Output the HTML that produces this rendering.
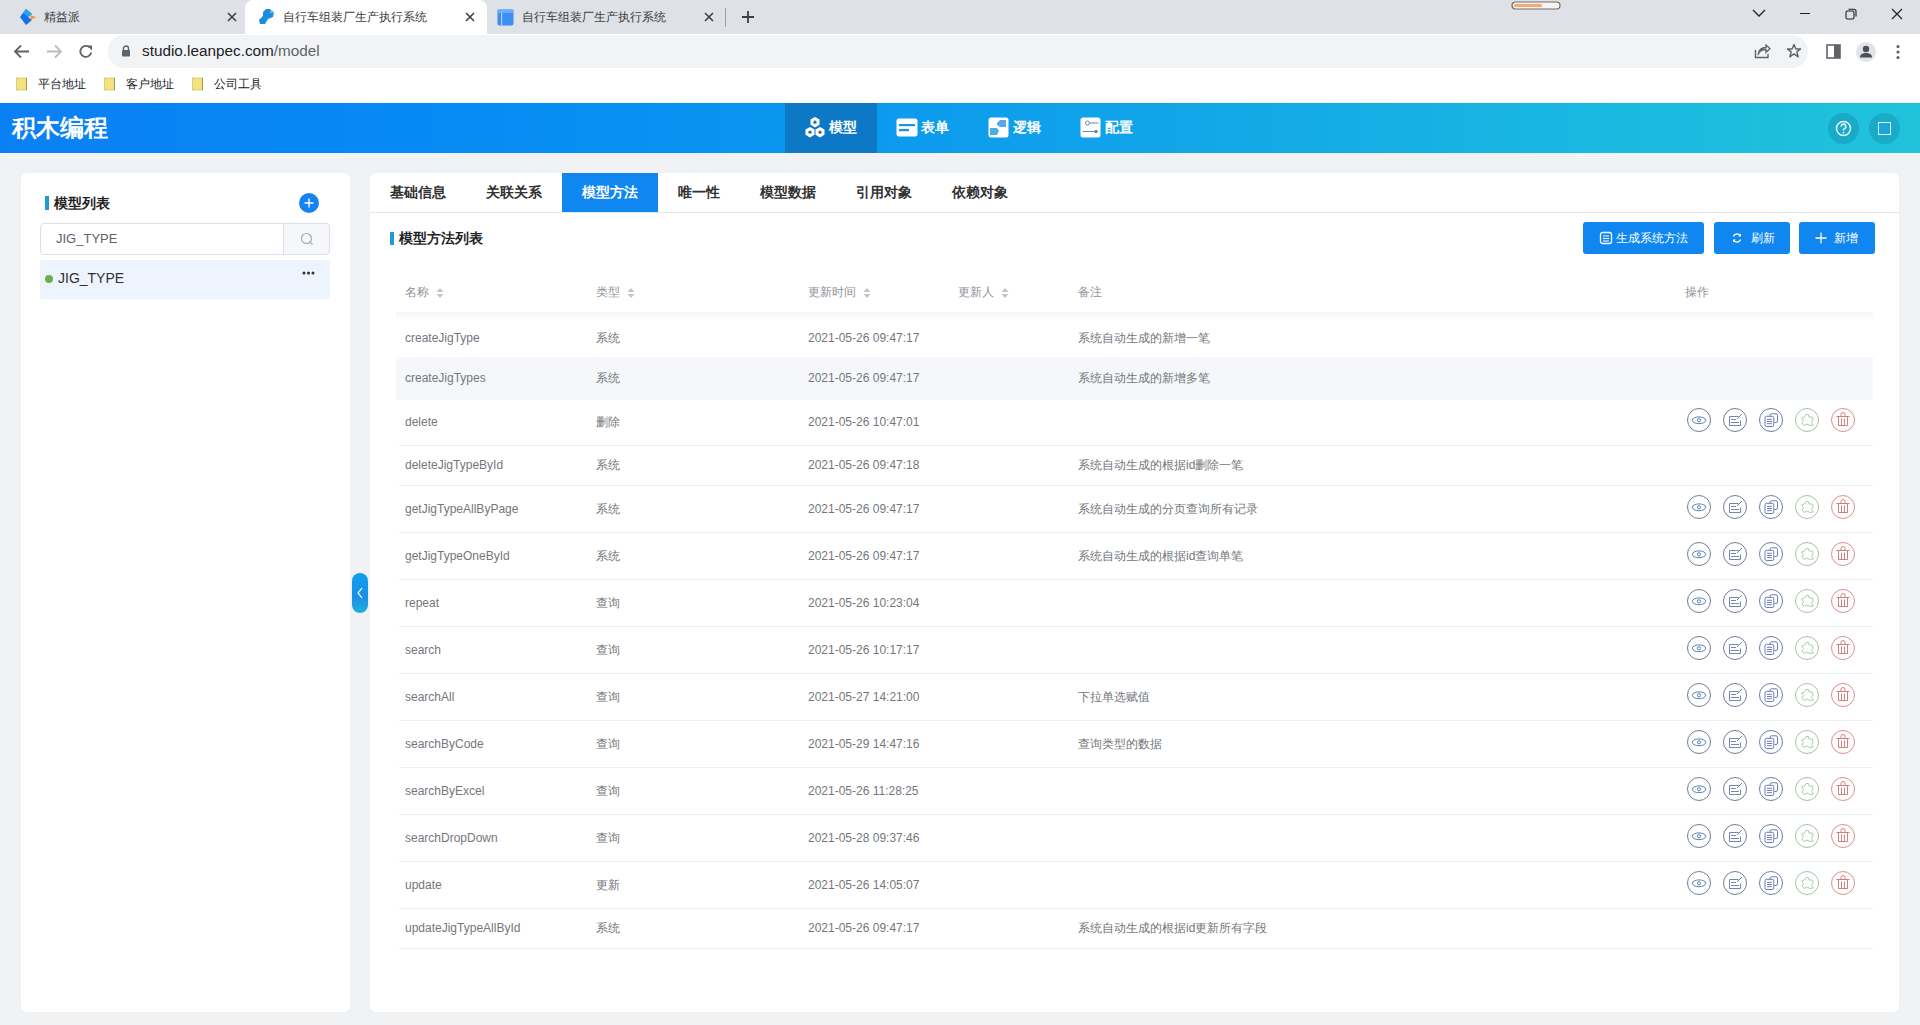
<!DOCTYPE html>
<html><head><meta charset="utf-8">
<style>
*{box-sizing:border-box;margin:0;padding:0}
html,body{width:1920px;height:1025px;overflow:hidden;font-family:"Liberation Sans",sans-serif;background:#f0f2f4;position:relative}
.abs{position:absolute}
/* chrome */
#tabbar{left:0;top:0;width:1920px;height:34px;background:#dee1e6}
#toolbar{left:0;top:34px;width:1920px;height:34px;background:#fff}
#bookmarks{left:0;top:68px;width:1920px;height:35px;background:#fff}
.tab{top:0;height:34px;font-size:12px;color:#3c4043;line-height:34px}
.bm{top:0;height:34px;line-height:33px;font-size:12px;color:#202124}
.tabact{background:#fff;border-radius:8px 8px 0 0}
#omni{left:108px;top:36px;width:1672px;height:31px;background:#f2f3f5;border-radius:16px}
/* header */
#hdr{left:0;top:103px;width:1920px;height:50px;background:linear-gradient(90deg,#0a80f5 0%,#0688f5 20%,#0894f0 38%,#12a6e8 62%,#18b6e2 80%,#20c3da 100%)}
#logo{left:12px;top:0;height:50px;line-height:50px;color:#fff;font-size:24px;font-weight:bold}
.nav{top:-1px;height:51px;width:92px;color:#fff;font-size:14px;line-height:51px;font-weight:600}
.navact{background:#0d79c6}
/* panels */
#lp{left:21px;top:173px;width:329px;height:839px;background:#fff;border-radius:6px}
#rp{left:370px;top:173px;width:1529px;height:839px;background:#fff;border-radius:6px}
.t14b{font-size:14px;font-weight:bold;color:#1f1f1f}
.bar{width:4px;height:14px;background:#1e9ad6}
.ptab{top:0;height:39px;line-height:39px;font-size:14px;color:#303133;text-align:center}
.btn{top:49px;height:32px;background:#0f86f0;border-radius:3px;color:#fff;font-size:12px;line-height:32px}
.th{font-size:12px;color:#909399;top:119px;line-height:0}
.cell{font-size:12px;color:#74777c;line-height:0}
.sep{left:29px;width:1474px;height:1px;background:#edeff3}
.act{width:24px;height:24px;border-radius:50%;border:1px solid #5f6b7d}
</style></head><body>
<div id="tabbar" class="abs">
  <svg class="abs" style="left:18px;top:8px" width="20" height="18" viewBox="0 0 20 18"><path d="M8 1 L14 6 L10 9 L14 12 L8 17 L2 9 Z" fill="#1570e8"/><path d="M8 1 L14 6 L10 9 L5 5 Z" fill="#29a3f0"/><path d="M12 7 L18 9 L13 12 Z" fill="#f7963a"/></svg>
  <div class="abs tab" style="left:44px">精益派</div>
  <svg class="abs" style="left:227px;top:12px" width="10" height="10" viewBox="0 0 10 10"><path d="M1 1L9 9M9 1L1 9" stroke="#3c4043" stroke-width="1.6"/></svg>
  <div class="abs tabact" style="left:245px;top:0;width:242px;height:34px"></div>
  <svg class="abs" style="left:257px;top:7px" width="20" height="20" viewBox="0 0 20 20"><path d="M9 2 L13 2 L13 6 L17 5 L16 10 L11 12 L8 17 L3 17 L2 13 L6 9 L6 5 Z" fill="#1c8ee0"/><path d="M13 2 L17 5 L13 6Z" fill="#5ab4f0"/></svg>
  <div class="abs tab" style="left:283px">自行车组装厂生产执行系统</div>
  <svg class="abs" style="left:465px;top:12px" width="10" height="10" viewBox="0 0 10 10"><path d="M1 1L9 9M9 1L1 9" stroke="#3c4043" stroke-width="1.6"/></svg>
  <svg class="abs" style="left:497px;top:9px" width="17" height="17" viewBox="0 0 17 17"><rect x="0.5" y="0.5" width="16" height="16" rx="2" fill="#3d8ef0"/><rect x="0.5" y="0.5" width="16" height="3.5" fill="#6aaef5"/><rect x="4" y="4" width="1.2" height="12.5" fill="#a8d0fa"/></svg>
  <div class="abs tab" style="left:522px">自行车组装厂生产执行系统</div>
  <svg class="abs" style="left:704px;top:12px" width="10" height="10" viewBox="0 0 10 10"><path d="M1 1L9 9M9 1L1 9" stroke="#3c4043" stroke-width="1.6"/></svg>
  <div class="abs" style="left:725px;top:8px;width:1px;height:19px;background:#9aa0a6"></div>
  <svg class="abs" style="left:741px;top:10px" width="14" height="14" viewBox="0 0 14 14"><path d="M7 1V13M1 7H13" stroke="#3c4043" stroke-width="1.8"/></svg>
  <svg class="abs" style="left:1511px;top:1px" width="50" height="9" viewBox="0 0 50 9"><rect x="1" y="1" width="48" height="7" rx="3.5" fill="#f4f4f4" stroke="#7a6a5a" stroke-width="1.2"/><rect x="3" y="3" width="28" height="3" rx="1.5" fill="#f0a878"/></svg>
  <svg class="abs" style="left:1752px;top:9px" width="14" height="9" viewBox="0 0 14 9"><path d="M1 1L7 7L13 1" fill="none" stroke="#202124" stroke-width="1.3"/></svg>
  <div class="abs" style="left:1800px;top:13px;width:10px;height:1px;background:#202124"></div>
  <svg class="abs" style="left:1845px;top:8px" width="12" height="12" viewBox="0 0 12 12"><rect x="1" y="3" width="8" height="8" rx="1.5" fill="none" stroke="#202124" stroke-width="1.1"/><path d="M3.5 1.2H9a2 2 0 0 1 2 2V8.5" fill="none" stroke="#202124" stroke-width="1.1"/></svg>
  <svg class="abs" style="left:1891px;top:8px" width="12" height="12" viewBox="0 0 12 12"><path d="M1 1L11 11M11 1L1 11" stroke="#202124" stroke-width="1.2"/></svg>
</div>
<div id="toolbar" class="abs">
  <svg class="abs" style="left:13px;top:10px" width="17" height="15" viewBox="0 0 17 15"><path d="M16 7.5H2M8 1.5L2 7.5L8 13.5" fill="none" stroke="#5f6368" stroke-width="1.8"/></svg>
  <svg class="abs" style="left:46px;top:10px" width="17" height="15" viewBox="0 0 17 15"><path d="M1 7.5H15M9 1.5L15 7.5L9 13.5" fill="none" stroke="#b9bcc0" stroke-width="1.8"/></svg>
  <svg class="abs" style="left:78px;top:10px" width="16" height="16" viewBox="0 0 16 16"><path d="M13.2 8.5A5.5 5.5 0 1 1 11.6 3.4" fill="none" stroke="#5f6368" stroke-width="1.8"/><path d="M9 1.5H14V6.5Z" fill="#5f6368"/></svg>
  <div id="omni" class="abs" style="top:1px;left:108px;width:1700px;height:33px"></div>
  <svg class="abs" style="left:121px;top:11px" width="10" height="12" viewBox="0 0 10 12"><path d="M2.5 5V3.5a2.5 2.5 0 0 1 5 0V5" fill="none" stroke="#5f6368" stroke-width="1.4"/><rect x="1" y="5" width="8" height="6.5" rx="1" fill="#5f6368"/></svg>
  <div class="abs" style="left:142px;top:0;height:34px;line-height:34px;font-size:15.3px;color:#202124">studio.leanpec.com<span style="color:#5f6368">/model</span></div>
  <svg class="abs" style="left:1754px;top:10px" width="17" height="15" viewBox="0 0 17 15"><path d="M1.5 6V13.5H14V10" fill="none" stroke="#5f6368" stroke-width="1.4"/><path d="M4 11C5 7 8 5.5 12 5.5V8.5L16 4.5L12 1V3.5C7 3.5 4.5 7 4 11Z" fill="none" stroke="#5f6368" stroke-width="1.3"/></svg>
  <svg class="abs" style="left:1786px;top:9px" width="16" height="16" viewBox="0 0 16 16"><path d="M8 1.5L9.9 6H14.6L10.8 8.9L12.2 13.8L8 10.9L3.8 13.8L5.2 8.9L1.4 6H6.1Z" fill="none" stroke="#5f6368" stroke-width="1.4" stroke-linejoin="round"/></svg>
  <svg class="abs" style="left:1826px;top:10px" width="16" height="15" viewBox="0 0 16 15"><rect x="1" y="1" width="13" height="13" fill="none" stroke="#5f6368" stroke-width="1.6"/><rect x="8" y="1" width="6" height="13" fill="#5f6368"/></svg>
  <div class="abs" style="left:1856px;top:8px;width:20px;height:20px;border-radius:50%;background:#e1e3e8"></div>
  <svg class="abs" style="left:1859px;top:10px" width="14" height="15" viewBox="0 0 14 15"><circle cx="7" cy="5" r="3.2" fill="#4b4f58"/><path d="M1 13.5C1 10 4 9 7 9S13 10 13 13.5Z" fill="#4b4f58"/></svg>
  <svg class="abs" style="left:1895px;top:10px" width="6" height="16" viewBox="0 0 6 16"><circle cx="3" cy="2.5" r="1.6" fill="#5f6368"/><circle cx="3" cy="8" r="1.6" fill="#5f6368"/><circle cx="3" cy="13.5" r="1.6" fill="#5f6368"/></svg>
</div>
<div id="bookmarks" class="abs">
  <svg class="abs" style="left:16px;top:9px" width="13" height="14" viewBox="0 0 13 14"><rect x="0.5" y="1" width="10" height="12" fill="#f6e27a" stroke="#cfc37a" stroke-width="0.8"/><path d="M10.5 1V13" stroke="#8c8a6a" stroke-width="0.8"/></svg>
  <div class="abs bm" style="left:38px">平台地址</div>
  <svg class="abs" style="left:104px;top:9px" width="13" height="14" viewBox="0 0 13 14"><rect x="0.5" y="1" width="10" height="12" fill="#f6e27a" stroke="#cfc37a" stroke-width="0.8"/><path d="M10.5 1V13" stroke="#8c8a6a" stroke-width="0.8"/></svg>
  <div class="abs bm" style="left:126px">客户地址</div>
  <svg class="abs" style="left:192px;top:9px" width="13" height="14" viewBox="0 0 13 14"><rect x="0.5" y="1" width="10" height="12" fill="#f6e27a" stroke="#cfc37a" stroke-width="0.8"/><path d="M10.5 1V13" stroke="#8c8a6a" stroke-width="0.8"/></svg>
  <div class="abs bm" style="left:214px">公司工具</div>
</div>
<div id="hdr" class="abs">
  <div id="logo" class="abs">积木编程</div>
  <div class="abs navact" style="left:785px;top:0;width:92px;height:50px"></div>
  <svg class="abs" style="left:804px;top:13px" width="22" height="23" viewBox="0 0 22 23"><g fill="#fff"><path d="M11 1L15.5 3.6V8.8L11 11.4L6.5 8.8V3.6Z"/><path d="M6 11L10.5 13.6V18.8L6 21.4L1.5 18.8V13.6Z"/><path d="M16 11L20.5 13.6V18.8L16 21.4L11.5 18.8V13.6Z"/></g><g fill="#2a6aa0"><circle cx="11" cy="6.2" r="1.6"/><circle cx="6" cy="16.2" r="1.6"/><circle cx="16" cy="16.2" r="1.6"/></g></svg>
  <div class="abs nav" style="left:829px">模型</div>
  <svg class="abs" style="left:896px;top:15px" width="22" height="19" viewBox="0 0 22 19"><rect x="0.5" y="0.5" width="21" height="18" rx="2.5" fill="#fff"/><rect x="3" y="6" width="16" height="2.2" fill="#1a95e6"/><rect x="3" y="11" width="10" height="2.2" fill="#1a95e6"/></svg>
  <div class="abs nav" style="left:921px">表单</div>
  <svg class="abs" style="left:988px;top:14px" width="21" height="21" viewBox="0 0 21 21"><rect x="0.5" y="0.5" width="20" height="20" rx="2.5" fill="#fff"/><path d="M9 6L12 3H18V10H12L9 8Z" fill="#5aa5ea"/><path d="M2 11H9L11 14L9 18H2Z" fill="#47b0e0"/></svg>
  <div class="abs nav" style="left:1013px">逻辑</div>
  <svg class="abs" style="left:1080px;top:14px" width="21" height="21" viewBox="0 0 21 21"><rect x="0.5" y="0.5" width="20" height="20" rx="2.5" fill="#fff"/><circle cx="7.5" cy="6" r="2" fill="none" stroke="#6b8aa8" stroke-width="1"/><path d="M9.5 6H18.5M2.5 14.5H15.5" stroke="#6b8aa8" stroke-width="1"/><circle cx="16" cy="14.5" r="1.8" fill="#6b8aa8"/></svg>
  <div class="abs nav" style="left:1105px">配置</div>
  <div class="abs" style="left:1828px;top:10px;width:31px;height:31px;border-radius:50%;background:rgba(0,70,110,0.18)"></div>
  <svg class="abs" style="left:1835px;top:17px" width="17" height="17" viewBox="0 0 17 17"><circle cx="8.5" cy="8.5" r="7" fill="none" stroke="#e6f6ff" stroke-width="1.5"/><path d="M6.2 6.6A2.3 2.3 0 1 1 9.3 8.6C8.7 8.9 8.5 9.3 8.5 10V10.6" fill="none" stroke="#e6f6ff" stroke-width="1.5"/><circle cx="8.5" cy="12.6" r="0.9" fill="#e6f6ff"/></svg>
  <div class="abs" style="left:1869px;top:10px;width:31px;height:31px;border-radius:50%;background:rgba(0,70,110,0.18)"></div>
  <div class="abs" style="left:1878px;top:19px;width:13px;height:13px;border:1.6px solid #e6f6ff;background:#1aa6dc"></div>
</div>
<svg width="0" height="0" style="position:absolute"><defs><g id="acts" fill="none" stroke-width="1">
<circle cx="13" cy="13" r="11.5" stroke="#6f7d96"/>
<circle cx="49" cy="13" r="11.5" stroke="#6f7d96"/>
<circle cx="85" cy="13" r="11.5" stroke="#6d7ca0"/>
<circle cx="121" cy="13" r="11.5" stroke="#a3c2aa"/>
<circle cx="157" cy="13" r="11.5" stroke="#d79090"/>
<ellipse cx="13" cy="13.3" rx="6.7" ry="3.4" stroke="#5a80b0"/><circle cx="13" cy="13.3" r="1.6" stroke="#5a80b0"/>
<path d="M52.5 9.5H43.5V18.5H54.5V13.5M45 12.5H50M45 15.5H53" stroke="#6478a8" stroke-width="0.9"/><path d="M51 12L56 7" stroke="#6478a8" stroke-width="0.9"/>
<path d="M84 9.5V8.3A1.5 1.5 0 0 1 85.5 6.8H90A1.5 1.5 0 0 1 91.5 8.3V14A1.5 1.5 0 0 1 90 15.5H88.5" stroke="#5a6fb0" stroke-width="0.9"/><rect x="79" y="9.3" width="8.8" height="10.2" rx="1.6" stroke="#5a6fb0" stroke-width="0.9"/><path d="M81 12.3H86M81 14.5H86M81 16.7H86" stroke="#5a6fb0" stroke-width="0.9"/>
<path d="M120 7.5L122.5 7.5L123 10L126.5 10L127 13L125.5 15.5L127.5 18L124 18.5L121 17L118 18.5L116 16L117.5 13.5L115.5 11L118.5 10Z" stroke="#a8ceb2" stroke-linejoin="round"/>
<path d="M150.5 9.5H163.5M155 9.5V7.5A2 2 0 0 1 159 7.5V9.5M152.5 9.5V18.5H161.5V9.5M155.5 11.5V18.5M158.5 11.5V18.5" stroke="#cf7070" stroke-width="0.9"/>
</g></defs></svg>
<div id="lp" class="abs">
  <div class="abs bar" style="left:24px;top:23px"></div>
  <div class="abs t14b" style="left:33px;top:30px;line-height:0">模型列表</div>
  <div class="abs" style="left:278px;top:20px;width:20px;height:20px;border-radius:50%;background:#1683f2"></div>
  <svg class="abs" style="left:282px;top:24px" width="12" height="12" viewBox="0 0 12 12"><path d="M6 1.5V10.5M1.5 6H10.5" stroke="#fff" stroke-width="1.4"/></svg>
  <div class="abs" style="left:19px;top:50px;width:290px;height:32px;border:1px solid #dcdfe6;border-radius:4px;background:#fff"></div>
  <div class="abs" style="left:262px;top:50px;width:47px;height:32px;border:1px solid #dcdfe6;border-radius:0 4px 4px 0;background:#f5f7fa"></div>
  <svg class="abs" style="left:279px;top:59px" width="14" height="14" viewBox="0 0 14 14"><circle cx="6.5" cy="6.5" r="5" fill="none" stroke="#a8abb2" stroke-width="1.2"/><path d="M10.2 10.2L12.5 12.5" stroke="#a8abb2" stroke-width="1.2"/></svg>
  <div class="abs" style="left:35px;top:66px;line-height:0;font-size:13px;color:#606266">JIG_TYPE</div>
  <div class="abs" style="left:19px;top:87px;width:290px;height:39px;background:#eef4fd"></div>
  <div class="abs" style="left:24px;top:102px;width:8px;height:8px;border-radius:50%;background:#6ab04c"></div>
  <div class="abs" style="left:37px;top:105px;line-height:0;font-size:14px;color:#303133">JIG_TYPE</div>
  <svg class="abs" style="left:281px;top:98px" width="13" height="4" viewBox="0 0 13 4"><circle cx="2" cy="2" r="1.5" fill="#303133"/><circle cx="6.5" cy="2" r="1.5" fill="#303133"/><circle cx="11" cy="2" r="1.5" fill="#303133"/></svg>
</div>
<div id="rp" class="abs">
<div class="abs" style="left:0;top:39px;width:1529px;height:1px;background:#e4e7ed"></div>
<div class="abs ptab" style="left:0px;width:96px;font-weight:600;">基础信息</div>
<div class="abs ptab" style="left:96px;width:96px;font-weight:600;">关联关系</div>
<div class="abs ptab" style="left:192px;width:96px;background:#0f86f0;color:#fff;font-weight:600;">模型方法</div>
<div class="abs ptab" style="left:288px;width:82px;font-weight:600;">唯一性</div>
<div class="abs ptab" style="left:370px;width:96px;font-weight:600;">模型数据</div>
<div class="abs ptab" style="left:466px;width:96px;font-weight:600;">引用对象</div>
<div class="abs ptab" style="left:562px;width:96px;font-weight:600;">依赖对象</div>
  <div class="abs bar" style="left:20px;top:59px;height:13px"></div>
  <div class="abs t14b" style="left:29px;top:65px;line-height:0">模型方法列表</div>
  <div class="abs btn" style="left:1213px;width:121px"></div>
  <svg class="abs" style="left:1229px;top:58px" width="14" height="14" viewBox="0 0 14 14"><rect x="1.5" y="1.5" width="11" height="11" rx="2" fill="none" stroke="#fff" stroke-width="1.3"/><path d="M4 5H10M4 7.5H10M4 10H10" stroke="#fff" stroke-width="1.1"/></svg>
  <div class="abs btn" style="left:1246px;background:none">生成系统方法</div>
  <div class="abs btn" style="left:1344px;width:76px"></div>
  <svg class="abs" style="left:1361px;top:59px" width="12" height="12" viewBox="0 0 12 12"><path d="M9.5 4A4 4 0 0 0 2.3 4.5M2.5 8A4 4 0 0 0 9.7 7.5" fill="none" stroke="#fff" stroke-width="1.3"/><path d="M10 1.5V4.5H7Z M2 10.5V7.5H5Z" fill="#fff"/></svg>
  <div class="abs btn" style="left:1381px;background:none">刷新</div>
  <div class="abs btn" style="left:1429px;width:76px"></div>
  <svg class="abs" style="left:1445px;top:59px" width="12" height="12" viewBox="0 0 12 12"><path d="M6 0.5V11.5M0.5 6H11.5" stroke="#fff" stroke-width="1.3"/></svg>
  <div class="abs btn" style="left:1464px;background:none">新增</div>
<div class="abs th" style="left:35px">名称</div>
<svg class="abs" style="left:66px;top:114px" width="8" height="12" viewBox="0 0 8 12"><path d="M4 1L7.5 5H0.5Z" fill="#c0c4cc"/><path d="M4 11L7.5 7H0.5Z" fill="#c0c4cc"/></svg>
<div class="abs th" style="left:226px">类型</div>
<svg class="abs" style="left:257px;top:114px" width="8" height="12" viewBox="0 0 8 12"><path d="M4 1L7.5 5H0.5Z" fill="#c0c4cc"/><path d="M4 11L7.5 7H0.5Z" fill="#c0c4cc"/></svg>
<div class="abs th" style="left:438px">更新时间</div>
<svg class="abs" style="left:493px;top:114px" width="8" height="12" viewBox="0 0 8 12"><path d="M4 1L7.5 5H0.5Z" fill="#c0c4cc"/><path d="M4 11L7.5 7H0.5Z" fill="#c0c4cc"/></svg>
<div class="abs th" style="left:588px">更新人</div>
<svg class="abs" style="left:631px;top:114px" width="8" height="12" viewBox="0 0 8 12"><path d="M4 1L7.5 5H0.5Z" fill="#c0c4cc"/><path d="M4 11L7.5 7H0.5Z" fill="#c0c4cc"/></svg>
<div class="abs th" style="left:708px">备注</div>
<div class="abs th" style="left:1315px">操作</div>
  <div class="abs" style="left:26px;top:139px;width:1477px;height:8px;background:linear-gradient(180deg,#f6f7f9,#fdfdfe)"></div>
<div class="abs" style="left:26px;top:184px;width:1477px;height:43px;background:#f5f7fa"></div>
<div class="abs sep" style="top:272px"></div>
<div class="abs sep" style="top:312px"></div>
<div class="abs sep" style="top:359px"></div>
<div class="abs sep" style="top:406px"></div>
<div class="abs sep" style="top:453px"></div>
<div class="abs sep" style="top:500px"></div>
<div class="abs sep" style="top:547px"></div>
<div class="abs sep" style="top:594px"></div>
<div class="abs sep" style="top:641px"></div>
<div class="abs sep" style="top:688px"></div>
<div class="abs sep" style="top:735px"></div>
<div class="abs sep" style="top:775px"></div>
<div class="abs cell" style="left:35px;top:165px">createJigType</div>
<div class="abs cell" style="left:226px;top:165px">系统</div>
<div class="abs cell" style="left:438px;top:165px">2021-05-26 09:47:17</div>
<div class="abs cell" style="left:708px;top:165px">系统自动生成的新增一笔</div>
<div class="abs cell" style="left:35px;top:205px">createJigTypes</div>
<div class="abs cell" style="left:226px;top:205px">系统</div>
<div class="abs cell" style="left:438px;top:205px">2021-05-26 09:47:17</div>
<div class="abs cell" style="left:708px;top:205px">系统自动生成的新增多笔</div>
<div class="abs cell" style="left:35px;top:249px">delete</div>
<div class="abs cell" style="left:226px;top:249px">删除</div>
<div class="abs cell" style="left:438px;top:249px">2021-05-26 10:47:01</div>
<svg class="abs" style="left:1316px;top:234px" width="170" height="26"><use href="#acts"/></svg>
<div class="abs cell" style="left:35px;top:292px">deleteJigTypeById</div>
<div class="abs cell" style="left:226px;top:292px">系统</div>
<div class="abs cell" style="left:438px;top:292px">2021-05-26 09:47:18</div>
<div class="abs cell" style="left:708px;top:292px">系统自动生成的根据id删除一笔</div>
<div class="abs cell" style="left:35px;top:336px">getJigTypeAllByPage</div>
<div class="abs cell" style="left:226px;top:336px">系统</div>
<div class="abs cell" style="left:438px;top:336px">2021-05-26 09:47:17</div>
<div class="abs cell" style="left:708px;top:336px">系统自动生成的分页查询所有记录</div>
<svg class="abs" style="left:1316px;top:321px" width="170" height="26"><use href="#acts"/></svg>
<div class="abs cell" style="left:35px;top:383px">getJigTypeOneById</div>
<div class="abs cell" style="left:226px;top:383px">系统</div>
<div class="abs cell" style="left:438px;top:383px">2021-05-26 09:47:17</div>
<div class="abs cell" style="left:708px;top:383px">系统自动生成的根据id查询单笔</div>
<svg class="abs" style="left:1316px;top:368px" width="170" height="26"><use href="#acts"/></svg>
<div class="abs cell" style="left:35px;top:430px">repeat</div>
<div class="abs cell" style="left:226px;top:430px">查询</div>
<div class="abs cell" style="left:438px;top:430px">2021-05-26 10:23:04</div>
<svg class="abs" style="left:1316px;top:415px" width="170" height="26"><use href="#acts"/></svg>
<div class="abs cell" style="left:35px;top:477px">search</div>
<div class="abs cell" style="left:226px;top:477px">查询</div>
<div class="abs cell" style="left:438px;top:477px">2021-05-26 10:17:17</div>
<svg class="abs" style="left:1316px;top:462px" width="170" height="26"><use href="#acts"/></svg>
<div class="abs cell" style="left:35px;top:524px">searchAll</div>
<div class="abs cell" style="left:226px;top:524px">查询</div>
<div class="abs cell" style="left:438px;top:524px">2021-05-27 14:21:00</div>
<div class="abs cell" style="left:708px;top:524px">下拉单选赋值</div>
<svg class="abs" style="left:1316px;top:509px" width="170" height="26"><use href="#acts"/></svg>
<div class="abs cell" style="left:35px;top:571px">searchByCode</div>
<div class="abs cell" style="left:226px;top:571px">查询</div>
<div class="abs cell" style="left:438px;top:571px">2021-05-29 14:47:16</div>
<div class="abs cell" style="left:708px;top:571px">查询类型的数据</div>
<svg class="abs" style="left:1316px;top:556px" width="170" height="26"><use href="#acts"/></svg>
<div class="abs cell" style="left:35px;top:618px">searchByExcel</div>
<div class="abs cell" style="left:226px;top:618px">查询</div>
<div class="abs cell" style="left:438px;top:618px">2021-05-26 11:28:25</div>
<svg class="abs" style="left:1316px;top:603px" width="170" height="26"><use href="#acts"/></svg>
<div class="abs cell" style="left:35px;top:665px">searchDropDown</div>
<div class="abs cell" style="left:226px;top:665px">查询</div>
<div class="abs cell" style="left:438px;top:665px">2021-05-28 09:37:46</div>
<svg class="abs" style="left:1316px;top:650px" width="170" height="26"><use href="#acts"/></svg>
<div class="abs cell" style="left:35px;top:712px">update</div>
<div class="abs cell" style="left:226px;top:712px">更新</div>
<div class="abs cell" style="left:438px;top:712px">2021-05-26 14:05:07</div>
<svg class="abs" style="left:1316px;top:697px" width="170" height="26"><use href="#acts"/></svg>
<div class="abs cell" style="left:35px;top:755px">updateJigTypeAllById</div>
<div class="abs cell" style="left:226px;top:755px">系统</div>
<div class="abs cell" style="left:438px;top:755px">2021-05-26 09:47:17</div>
<div class="abs cell" style="left:708px;top:755px">系统自动生成的根据id更新所有字段</div>
</div>
<div class="abs" style="left:352px;top:573px;width:16px;height:40px;border-radius:8px;background:linear-gradient(180deg,#0e9ef0,#1a8ee8 60%,#1fb0d8)"></div>
<svg class="abs" style="left:355px;top:586px" width="10" height="14" viewBox="0 0 10 14"><path d="M7 2L3 7L7 12" fill="none" stroke="#d8f0ff" stroke-width="1.3"/></svg>
</body></html>
